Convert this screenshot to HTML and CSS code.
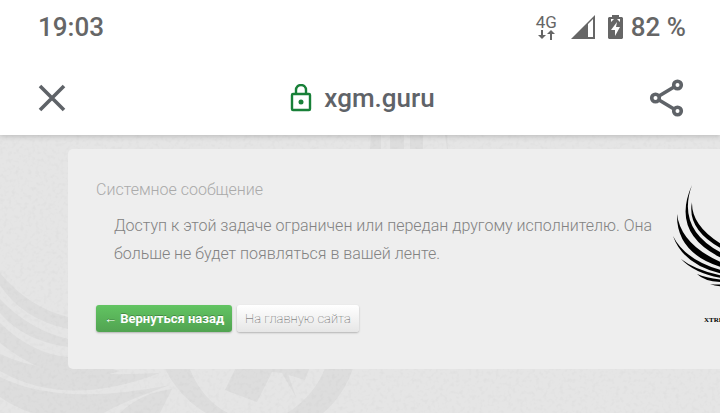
FILE: index.html
```html
<!DOCTYPE html>
<html lang="ru">
<head>
    <meta charset="UTF-8">
    <meta name="viewport" content="width=device-width, initial-scale=1.0">
    <title>Системное сообщение</title>
    <link rel="stylesheet" href="styles.css">
</head>
<body>

<header class="top">
    <div class="status">
        <span class="time">19:03</span>
        <div class="indicators">
            <div class="network">
                <span>4G</span>
                <svg width="18" height="10" viewBox="0 0 18 10" fill="#666">
                    <path d="M4 0h2v5h3L5 9 1 5h3zM13 10h2V4h3L14 0l-4 4h3z"/>
                </svg>
            </div>
            <svg class="signal" width="24" height="24" viewBox="0 0 24 24" fill="#666">
                <path fill-rule="evenodd" d="M24 0v24H0zM17 9v13h5V4z"/>
            </svg>
            <svg class="battery" width="15" height="24" viewBox="0 0 15 24">
                <path fill="#666" d="M4 0h7v2h3l1 1v20l-1 1H1l-1-1V3l1-1h3z"/>
                <path fill="#fff" d="M9 7 3 15h4v6l5-9H8zM3 4h3L3 7zM9 4h3v3z"/>
            </svg>
            <span class="charge">82 %</span>
        </div>
    </div>
    <div class="toolbar">
        <button class="icon-btn" aria-label="Закрыть">
            <svg width="28" height="28" viewBox="0 0 28 28" fill="none" stroke="#5f6368" stroke-width="3.600">
                <path d="M2 2l24 24M26 2L2 26"/>
            </svg>
        </button>
        <div class="address">
            <svg width="22" height="28" viewBox="0 0 22 28" fill="none" stroke="#188038" stroke-width="2.400">
                <rect x="2" y="10" width="18" height="16" rx="1"/>
                <path d="M6 10V6a5 5 0 0 1 10 0v4"/>
                <circle cx="11" cy="18" r="2.500" fill="#188038" stroke="none"/>
            </svg>
            <span>xgm.guru</span>
        </div>
        <button class="icon-btn" aria-label="Поделиться">
            <svg width="36" height="38" viewBox="0 0 36 38" fill="none" stroke="#5f6368" stroke-width="3.600">
                <path d="M10 17l15-9M10 21l15 9"/>
                <circle cx="6.500" cy="19" r="3.800"/>
                <circle cx="28.500" cy="6" r="3.800"/>
                <circle cx="28.500" cy="32" r="3.800"/>
            </svg>
        </button>
    </div>
</header>

<main class="page">
    <svg class="watermark" width="720" height="278" viewBox="0 0 720 278">
        <filter id="paper" x="0" y="0" width="100%" height="100%">
            <feTurbulence type="fractalNoise" baseFrequency="0.25" numOctaves="3"/>
            <feColorMatrix values="0 0 0 0 0  0 0 0 0 0  0 0 0 0 0  0.060 0 0 0 -0.028"/>
        </filter>
        <g fill="#dddddd">
            <path d="M0 138Q28 172 68 182V194Q22 184 0 150z"/>
            <path d="M0 164Q28 194 68 204V212Q24 206 0 178z"/>
            <path d="M0 188Q32 219 68 222L120 236Q60 256 0 208z"/>
            <path d="M0 219Q54 244 160 238Q66 274 0 236z"/>
            <path d="M0 242Q60 272 170 250Q120 268 104 278H32Q14 272 0 262z"/>
            <path d="M120 278Q140 258 172 254L160 278z"/>
            <path fill-rule="evenodd" d="M157 195a101 101 0 1 1 202 0c0 35-14 65-36 83H206c-30-18-49-48-49-83zM183 195c0 38 18 69 45 83h59c28-17 45-46 45-83a74 76 0 1 0-149 0z"/>
            <path d="M240 224l-15 31 32 12 15-30 10 1 23 7 8-21zM282 238l14 24-9-26z"/>
            <path d="M371 0h10v14h-11zM390 0h14v14h-14zM410 0h13v14h-13zM445 0h2l1 14h-1z"/>
        </g>
        <rect width="720" height="278" filter="url(#paper)"/>
    </svg>

    <section class="card">
        <div class="message">
            <h1>Системное сообщение</h1>
            <p>Доступ к этой задаче ограничен или передан другому исполнителю. Она больше не будет появляться в вашей ленте.</p>
            <div class="actions">
                <button class="btn btn-green">← Вернуться назад</button>
                <button class="btn">На главную сайта</button>
            </div>
        </div>
        <div class="logo">
            <svg width="90" height="106" viewBox="0 0 90 106">
                <path d="M20 19Q19 45 56 65V69Q14 49 20 19z"/>
                <path d="M20 2Q3 49 56 73V78Q-3 53 20 2z"/>
                <path d="M5 31Q9 64 56 82V86Q4 73 5 31z"/>
                <path d="M1 53Q14 79 56 89V92Q12 84 1 53z"/>
                <path d="M9 76Q24 88 56 94V96Q24 92 9 76z"/>
                <path d="M25 91Q36 96 56 97V99Q34 100 25 91z"/>
                <path d="M38 101Q46 102 56 101V103Q46 104 38 101z"/>
            </svg>
            <span>XTRE</span>
        </div>
    </section>
</main>

</body>
</html>
```

FILE: styles.css
```css
* {
    box-sizing: border-box;
}
body {
    margin: 0;
    min-height: 100vh;
    display: flex;
    flex-direction: column;
    font-family: Roboto, sans-serif;
    background-color: #e5e5e5;
    overflow: hidden;
}
button {
    font-family: inherit;
    cursor: pointer;
}
.top {
    position: relative;
    z-index: 2;
    background: #fff;
    box-shadow: 0 1px 6px rgba(0, 0, 0, 0.2);
}
.status {
    display: flex;
    align-items: center;
    justify-content: space-between;
    height: 54px;
    padding: 0 34px 0 38px;
    color: #666;
    font-size: 26px;
    font-weight: 500;
}
.indicators {
    display: flex;
    align-items: center;
}
.network {
    display: flex;
    flex-direction: column;
    align-items: center;
    font-size: 17px;
    font-weight: 400;
    line-height: 16px;
}
.signal {
    margin-left: 14px;
}
.battery {
    margin: 0 8px 0 13px;
}
.toolbar {
    display: flex;
    align-items: center;
    justify-content: space-between;
    height: 81px;
    padding: 6px 35px 0 38px;
}
.icon-btn {
    display: flex;
    padding: 0;
    border: none;
    background: none;
}
.address {
    display: flex;
    align-items: center;
    gap: 12px;
    margin-left: 10px;
    color: #5f6368;
    font-size: 26px;
    font-weight: 500;
}
.page {
    position: relative;
    flex: 1;
    padding: 14px 0 44px 68px;
    overflow: hidden;
}
.watermark {
    position: absolute;
    top: 0;
    left: 0;
}
.card {
    position: relative;
    display: flex;
    align-items: flex-start;
    margin-right: -60px;
    padding: 29px 18px 37px 28px;
    background: #eee;
    border-radius: 5px;
}
.message {
    flex: 1;
}
h1 {
    margin: 0;
    color: #aaa;
    font-size: 16px;
    font-weight: 300;
    line-height: 24px;
}
p {
    margin: 10px 12px 37px 18px;
    color: #828282;
    font-size: 16px;
    font-weight: 300;
    line-height: 28px;
}
.actions {
    display: flex;
    gap: 5px;
}
.btn {
    height: 27px;
    padding: 0 8px;
    border: none;
    border-radius: 3px;
    background: linear-gradient(#fff, #e6e6e6);
    box-shadow: 0 1px 2px rgba(0, 0, 0, 0.25);
    color: #555;
    font-size: 13px;
    font-weight: 100;
}
.btn-green {
    background: linear-gradient(#62c462, #51a351);
    color: #fff;
    font-weight: 700;
    text-shadow: 0 -1px 0 rgba(0, 0, 0, 0.25);
}
.logo {
    display: flex;
    flex-direction: column;
    width: 90px;
    margin-top: 5px;
}
.logo span {
    margin: 25px 0 0 32px;
    font-family: "Liberation Serif", serif;
    font-size: 7px;
    font-weight: 700;
    line-height: 12px;
}
```
